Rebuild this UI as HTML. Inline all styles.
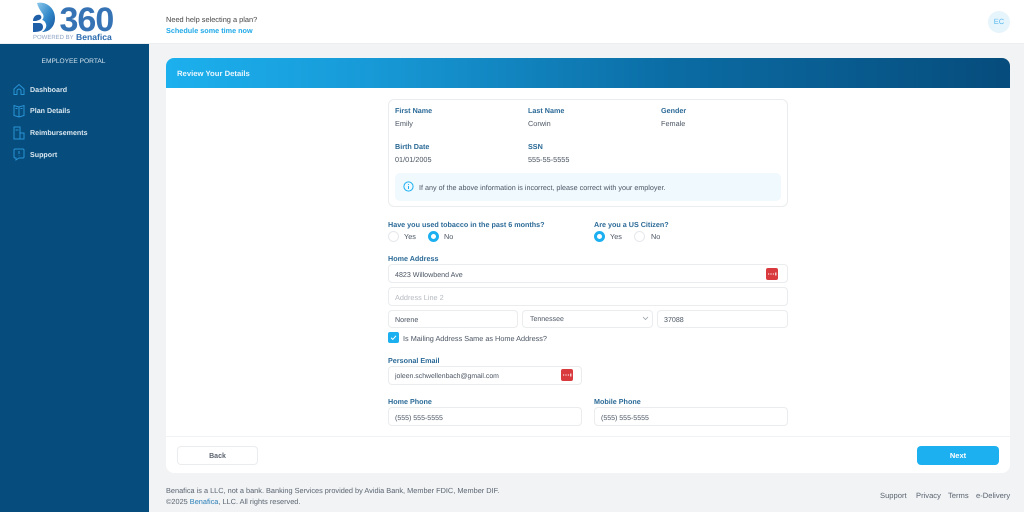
<!DOCTYPE html>
<html lang="en"><head><meta charset="utf-8"><title>Review Your Details</title>
<style>
*{box-sizing:border-box}
html,body{margin:0;padding:0;width:1024px;height:512px;overflow:hidden;background:#f1f3f5;font-family:"Liberation Sans",sans-serif;text-rendering:geometricPrecision}
.a{position:absolute}
.t{position:absolute;white-space:nowrap;font-size:7.3px;line-height:10px;color:#4b5563}
.l{font-weight:bold;color:#2b6a97;font-size:7.2px}
.inp{position:absolute;background:#fff;border:1px solid #eaecee;border-radius:4px}
.nav{color:#dbe8f1;font-weight:bold;font-size:7.1px}
.f{color:#5b6470;font-size:7.6px}
.r{position:absolute;width:11px;height:11px;border-radius:50%;background:#fff;border:1px solid #e6e8eb}
.r.on{border:3px solid #1cb0f0}
</style></head><body>
<header class="a" style="left:0;top:0;width:1024px;height:44px;background:#fff;border-bottom:1px solid #eceef0"></header>
<svg class="a" style="left:30px;top:0" width="30" height="36" viewBox="0 0 30 36">
<defs><linearGradient id="g" x1="0" y1="0" x2="1" y2="1"><stop offset="0" stop-color="#8cc8ea"/><stop offset=".55" stop-color="#2f86c8"/><stop offset="1" stop-color="#17519a"/></linearGradient></defs>
<path d="M7 3C16 1 25 8 25 18C25 27 19 32 12 32C15 30 17 27 16 24C15 21 13 20 12 20C14 18 14 15 12 13C10 10 8 7 7 3Z" fill="url(#g)"/>
<path d="M3 21C3 17 6 14 10 15C12 16 12 19 9 20L6 21ZM3 23H9C13 23 14 27 12 30C10 32 5 32 3 32Z" fill="#1f5fa8"/></svg>
<div class="t" style="left:59.5px;top:2px;font-size:34px;line-height:36px;font-weight:bold;color:#3673b5;letter-spacing:-1px">360</div>
<div class="t" style="left:33px;top:34px;font-size:6px;line-height:8px;color:#8fa5c6">POWERED BY</div>
<div class="t" style="left:76px;top:32px;font-size:8.6px;line-height:10px;font-weight:bold;color:#2f6db0">Benafica</div>
<div class="t" style="left:166px;top:15px;color:#444;font-size:7.4px">Need help selecting a plan?</div>
<div class="t" style="left:166px;top:26px;color:#1fa9e8;font-weight:bold;font-size:7.25px">Schedule some time now</div>
<div class="a" style="left:988px;top:11px;width:22px;height:22px;border-radius:50%;background:#e6f4fc;color:#5cbcf0;font-size:7.5px;line-height:22px;text-align:center">EC</div>

<aside class="a" style="left:0;top:44px;width:149px;height:468px;background:#064c7c"></aside>
<div class="t" style="left:0;width:147px;text-align:center;top:56.5px;color:#d5e3ee;font-size:6.6px">EMPLOYEE PORTAL</div>
<svg class="a" style="left:13px;top:83px" width="12" height="78" viewBox="0 0 12 78" fill="none" stroke="#2a93d6" stroke-width="1">
<path d="M1 6L6 1.5L11 6V11.5H8V8C8 5.5 4 5.5 4 8V11.5H1Z"/>
<path d="M6 24L1 22.5V32.5L6 34L11 32.5V22.5ZM6 24V34M2.5 25.5H4.5M7.5 25.5H9.5"/>
<path d="M1 44H7V56H1ZM7 50H11V56H7ZM2.5 47H5.5"/>
<path d="M2 66H10Q11 66 11 67V74Q11 75 10 75H6L3 77V75H2Q1 75 1 74V67Q1 66 2 66ZM6 68V71M6 72.5V73"/></svg>
<div class="t nav" style="left:30px;top:85px">Dashboard</div>
<div class="t nav" style="left:30px;top:106px">Plan Details</div>
<div class="t nav" style="left:30px;top:128px">Reimbursements</div>
<div class="t nav" style="left:30px;top:150px">Support</div>

<main class="a" style="left:166px;top:58px;width:844px;height:415px;background:#fff;border-radius:8px;overflow:hidden">
<div class="a" style="left:0;top:0;width:844px;height:30px;background:linear-gradient(90deg,#1cb0ee 0%,#1799d6 25%,#0b6ca4 60%,#064c7c 100%)"></div>
<div class="a" style="left:0;top:378px;width:844px;height:1px;background:#f1f2f4"></div>
</main>
<div class="t" style="left:177px;top:69px;color:#e8f6fd;font-weight:bold;font-size:7.7px">Review Your Details</div>

<section class="a" style="left:388px;top:99px;width:400px;height:108px;border:1px solid #eaecee;border-radius:6px"></section>
<div class="t l" style="left:395px;top:106px">First Name</div><div class="t" style="left:395px;top:119px">Emily</div>
<div class="t l" style="left:528px;top:106px">Last Name</div><div class="t" style="left:528px;top:119px">Corwin</div>
<div class="t l" style="left:661px;top:106px">Gender</div><div class="t" style="left:661px;top:119px">Female</div>
<div class="t l" style="left:395px;top:142px">Birth Date</div><div class="t" style="left:395px;top:155px">01/01/2005</div>
<div class="t l" style="left:528px;top:142px">SSN</div><div class="t" style="left:528px;top:155px">555-55-5555</div>
<div class="a" style="left:395px;top:173px;width:386px;height:28px;background:#f0f9fe;border-radius:5px"></div>
<svg class="a" style="left:403px;top:181px" width="11" height="11" viewBox="0 0 11 11" fill="none" stroke="#1cb0f0"><circle cx="5.5" cy="5.5" r="4.6"/><path d="M5.5 5V8M5.5 3V3.9"/></svg>
<div class="t" style="left:419px;top:183px;font-size:7.2px">If any of the above information is incorrect, please correct with your employer.</div>

<div class="t l" style="left:388px;top:220px">Have you used tobacco in the past 6 months?</div>
<div class="t l" style="left:594px;top:220px">Are you a US Citizen?</div>
<div class="r" style="left:388px;top:231px"></div><div class="t" style="left:404px;top:232px">Yes</div>
<div class="r on" style="left:428px;top:231px"></div><div class="t" style="left:444px;top:232px">No</div>
<div class="r on" style="left:594px;top:231px"></div><div class="t" style="left:610px;top:232px">Yes</div>
<div class="r" style="left:634px;top:231px"></div><div class="t" style="left:651px;top:232px">No</div>

<div class="t l" style="left:388px;top:254px">Home Address</div>
<div class="inp" style="left:388px;top:264px;width:400px;height:19px"></div><div class="t" style="left:395px;top:270px;font-size:7.1px">4823 Willowbend Ave</div>
<svg class="a" style="left:766px;top:268px" width="12" height="12" viewBox="0 0 12 12"><rect width="12" height="12" rx="2" fill="#d93a3e"/><path d="M2 6H3.2M4.4 6H5.6M6.8 6H8M9.8 4.5V7.5" stroke="#fff" stroke-width="1.1" fill="none"/></svg>
<div class="inp" style="left:388px;top:287px;width:400px;height:19px"></div><div class="t" style="left:395px;top:293px;color:#b4b9c0">Address Line 2</div>
<div class="inp" style="left:388px;top:310px;width:130px;height:18px"></div><div class="t" style="left:395px;top:315px;font-size:7.1px">Norene</div>
<div class="inp" style="left:522px;top:310px;width:131px;height:18px"></div><div class="t" style="left:530px;top:314.5px;font-size:7px">Tennessee</div>
<svg class="a" style="left:642px;top:316px" width="7" height="5" viewBox="0 0 7 5" fill="none" stroke="#9aa1a9" stroke-width=".8"><path d="M1 1L3.5 3.5L6 1"/></svg>
<div class="inp" style="left:657px;top:310px;width:131px;height:18px"></div><div class="t" style="left:664px;top:315px;font-size:7.1px">37088</div>
<div class="a" style="left:388px;top:332px;width:11px;height:11px;background:#1cb0f0;border-radius:2px"></div>
<svg class="a" style="left:388px;top:332px" width="11" height="11" viewBox="0 0 11 11" fill="none" stroke="#fff" stroke-width="1"><path d="M3 5.7L4.8 7.4L8 3.8"/></svg>
<div class="t" style="left:403px;top:334px">Is Mailing Address Same as Home Address?</div>

<div class="t l" style="left:388px;top:356px">Personal Email</div>
<div class="inp" style="left:388px;top:366px;width:194px;height:19px"></div><div class="t" style="left:395px;top:372px;font-size:6.9px">joleen.schwellenbach@gmail.com</div>
<svg class="a" style="left:561px;top:369px" width="12" height="12" viewBox="0 0 12 12"><rect width="12" height="12" rx="2" fill="#d93a3e"/><path d="M2 6H3.2M4.4 6H5.6M6.8 6H8M9.8 4.5V7.5" stroke="#fff" stroke-width="1.1" fill="none"/></svg>

<div class="t l" style="left:388px;top:397px">Home Phone</div><div class="t l" style="left:594px;top:397px">Mobile Phone</div>
<div class="inp" style="left:388px;top:407px;width:194px;height:19px"></div><div class="t" style="left:395px;top:413.5px;font-size:7px">(555) 555-5555</div>
<div class="inp" style="left:594px;top:407px;width:194px;height:19px"></div><div class="t" style="left:601px;top:413.5px;font-size:7px">(555) 555-5555</div>

<button class="a" style="left:177px;top:446px;width:81px;height:19px;background:#fff;border:1px solid #eaecee;border-radius:4px;font:bold 7px 'Liberation Sans',sans-serif;color:#5b6470;padding:1px 0 0">Back</button>
<button class="a" style="left:917px;top:446px;width:82px;height:19px;background:#1cb0f0;border:0;border-radius:4px;font:bold 7.5px 'Liberation Sans',sans-serif;color:#fff;padding:0">Next</button>

<div class="t f" style="left:166px;top:486px;font-size:7.35px">Benafica is a LLC, not a bank. Banking Services provided by Avidia Bank, Member FDIC, Member DIF.</div>
<div class="t f" style="left:166px;top:497px;font-size:7.35px">©2025 <span style="color:#2b7fb8">Benafica</span>, LLC. All rights reserved.</div>
<div class="t f" style="left:880px;top:491px">Support</div>
<div class="t f" style="left:916px;top:491px">Privacy</div>
<div class="t f" style="left:948px;top:491px">Terms</div>
<div class="t f" style="left:976px;top:491px">e-Delivery</div>
</body></html>
